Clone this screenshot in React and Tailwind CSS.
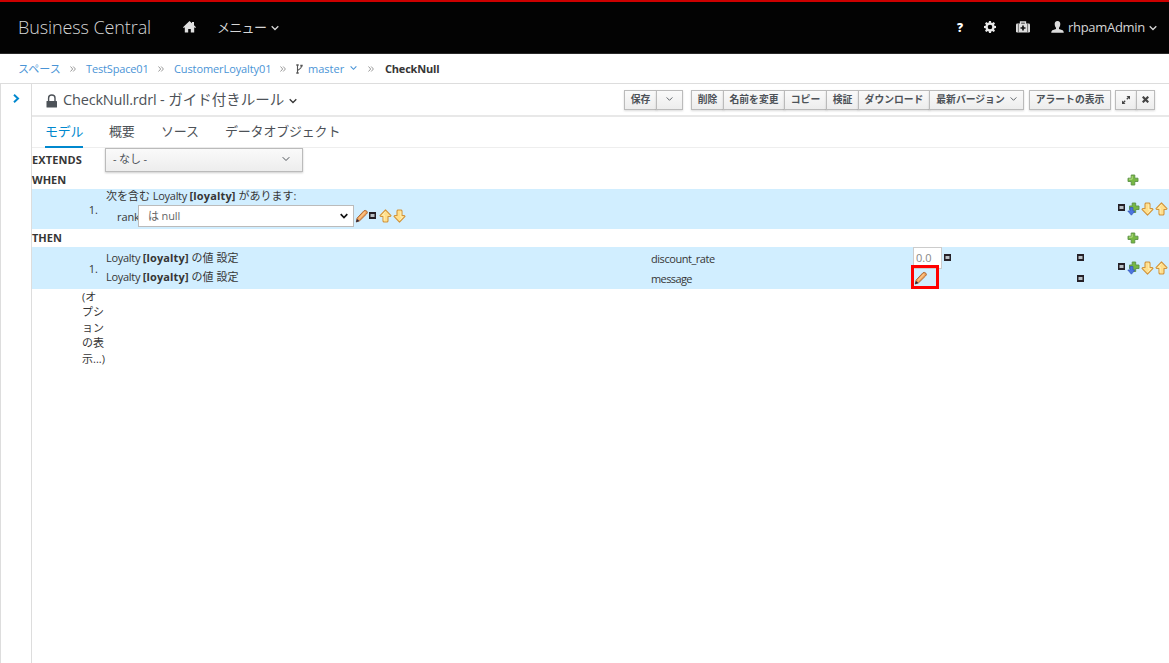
import React from 'react';

const Chevron = ({ className = '', w = 8, sw = 1.3 }) => (
  <svg width={w} height="6" viewBox="0 0 8 6" className={`shrink-0 ${className}`} fill="none" stroke="currentColor" strokeWidth={sw}>
    <path d="M0.7 1.2 4 4.5 7.3 1.2" />
  </svg>
);

const Pencil = () => (
  <svg width="14" height="14" viewBox="0 0 14 14" className="shrink-0">
    <path d="M2 9.2 9 1.7Q10.8.8 12.2 2.6 12.8 4 11.5 5L4.6 11.8 1.3 13Z" fill="#efa35d" stroke="#a6602c" strokeWidth="0.9" />
    <path d="M4.2 9.4 10 3.2" stroke="#fcc98d" strokeWidth="1.2" />
    <path d="M1 13.3 2 9.9 4.4 12Z" fill="#26263f" />
  </svg>
);

const Square = () => (
  <svg width="7" height="7" viewBox="0 0 7 7" className="shrink-0">
    <rect width="7" height="7" fill="#252027" />
    <rect x="1.5" y="2" width="4" height="3" fill="#b9c0c5" />
  </svg>
);

const Arrow = ({ down }) => (
  <svg width="13" height="14" viewBox="0 0 13 14" className={`shrink-0 ${down ? 'rotate-180' : ''}`}>
    <path d="M6.5.8 12 6.6 11.3 7.5H9V12.2L8.2 13H4.8L4 12.2V7.5H1.7L1 6.6Z" fill="#ffdf8c" stroke="#d1943c" strokeWidth="1.1" strokeLinejoin="round" />
    <path d="M6.2 2.8 3.5 6H5.2V11.5" fill="none" stroke="#fff0b4" strokeWidth="1" />
  </svg>
);

const Plus = () => (
  <svg width="12" height="12" viewBox="0 0 12 12" className="shrink-0">
    <path d="M4.2 1H7.8V4.2H11V7.5H7.8V11H4.2V7.5H1V4.2H4.2Z" fill="#77b843" stroke="#5c9148" strokeWidth="0.9" strokeLinejoin="round" />
    <path d="M5.2 2V5.2H2" fill="none" stroke="#b4dc83" />
  </svg>
);

const PlusDown = () => (
  <svg width="13" height="14" viewBox="0 0 13 14" className="shrink-0">
    <path d="M5.2 1H8.7V4H12V7.5H8.7V10.5H5.2V7.5H2.5V4H5.2Z" fill="#77b843" stroke="#5c9148" strokeWidth="0.9" strokeLinejoin="round" />
    <path d="M3 5.5H6V9H8L4.4 13.2.8 9H3Z" fill="#4c74df" stroke="#3458b8" strokeWidth="0.7" />
  </svg>
);

const Crumb = ({ children, className }) => (
  <span className={`shrink-0 whitespace-nowrap text-[#4a94d6] ${className}`}>{children}</span>
);

const Sep = ({ className }) => (
  <svg width="6" height="6" viewBox="0 0 6 6" className={`mt-px shrink-0 ${className}`} fill="none" stroke="#999" strokeWidth="1">
    <path d="M.5.5 2.7 3 .5 5.5M3.2.5 5.4 3 3.2 5.5" />
  </svg>
);

const Btn = ({ children, className }) => (
  <button className={`flex h-5 shrink-0 items-center justify-center whitespace-nowrap border border-[#bbb] bg-linear-to-b from-[#fafafa] to-[#ededed] text-[9.8px] font-bold leading-none text-[#4d5258] shadow-[0_1px_2px_rgba(0,0,0,0.15)] ${className}`}>
    {children}
  </button>
);

const RowActions = () => (
  <div className="flex w-[52px] shrink-0 items-center">
    <div className="mb-[3px]"><Square /></div>
    <div className="ml-[2px]"><PlusDown /></div>
    <div className="ml-[1px]"><Arrow down /></div>
    <div className="ml-[1px]"><Arrow /></div>
  </div>
);

const ActionText = () => (
  <div className="w-[545px] shrink-0 whitespace-nowrap">
    <span className="tracking-[-0.3px]">Loyalty </span><b className="tracking-[0.15px]">[loyalty]</b> の値 設定
  </div>
);

export default function App() {
  return (
    <div className="flex h-[663px] w-[1169px] flex-col overflow-hidden bg-white font-['Open_Sans','Noto_Sans_CJK_JP',sans-serif] text-[11px] leading-[15px] text-[#363636]">
      <header className="flex h-[54px] shrink-0 items-center border-t-2 border-b border-t-[#cc0000] border-b-[#292929] bg-[#030303] pb-px text-[#d6d6d6]">
        <span className="ml-[18px] w-[165px] shrink-0 whitespace-nowrap text-[18px] font-light leading-6 tracking-[-0.1px]">Business Central</span>
        <svg width="13" height="12" viewBox="0 0 13 12" className="shrink-0" fill="#e0e0e0">
          <path d="M6.5 0 9 2.3V1H11V4.2L13 6.2 12.2 7 11.2 6.2V11.5H7.8V8H5.2V11.5H1.8V6.2L.8 7 0 6.2Z" />
        </svg>
        <span className="ml-[21px] w-[54px] shrink-0 whitespace-nowrap text-[13px] tracking-[-0.7px]">メニュー</span>
        <Chevron className="mt-px" />
        <div className="ml-auto flex items-center">
          <span className="w-[28px] pl-px text-[12px] font-extrabold text-white">?</span>
          <svg width="12" height="12" viewBox="0 0 12 12" fill="#e8e8e8">
            <path fillRule="evenodd" d="M5 0H7L7.3 1.7 8.2 2.1 9.7 1.1 11 2.4 10 3.8 10.4 4.8 12 5V7L10.4 7.3 10 8.2 11 9.7 9.7 11 8.2 10 7.3 10.4 7 12H5L4.7 10.4 3.8 10 2.4 11 1 9.7 2 8.2 1.6 7.3 0 7V5L1.6 4.7 2 3.8 1 2.4 2.4 1.1 3.8 2 4.7 1.6ZM6 3.7A2.3 2.3 0 1 0 6 8.3 2.3 2.3 0 1 0 6 3.7Z" />
          </svg>
          <svg width="14" height="12" viewBox="0 0 14 12" className="ml-[20px]">
            <path d="M4.5 3V1H9.5V3" fill="none" stroke="#ddd" strokeWidth="1.3" />
            <rect y="2.5" width="14" height="9" rx="1.2" fill="#ddd" />
            <path d="M2.4 2.5V11.5M11.6 2.5V11.5" stroke="#555" strokeWidth="0.8" />
            <path d="M7 4.5V9.5M4.5 7H9.5" stroke="#111" strokeWidth="1.7" />
          </svg>
          <svg width="13" height="12" viewBox="0 0 13 12" className="ml-[21px]" fill="#ddd">
            <path d="M6.5 0C8.6 0 9.4 1.3 9.3 3.2 9.2 5.1 8.5 6.2 8 6.8V8L11.7 9.2Q12.7 9.7 12.8 11.8H.2Q.3 9.7 1.3 9.2L5 8V6.8C4.5 6.2 3.8 5.1 3.7 3.2 3.6 1.3 4.4 0 6.5 0Z" />
          </svg>
          <span className="ml-[4px] w-[81px] whitespace-nowrap text-[13px] tracking-[-0.3px]">rhpamAdmin</span>
          <Chevron className="mt-px mr-[12px]" />
        </div>
      </header>

      <nav className="flex h-[30px] shrink-0 items-center border-b border-[#ddd] pl-[18px]">
        <Crumb className="w-[52px]">スペース</Crumb>
        <Sep className="mr-[10px]" />
        <Crumb className="w-[72px] tracking-[-0.15px]">TestSpace01</Crumb>
        <Sep className="mr-[10px]" />
        <Crumb className="w-[106px] tracking-[-0.1px]">CustomerLoyalty01</Crumb>
        <Sep className="mr-[10px]" />
        <svg width="7" height="10" viewBox="0 0 7 10" className="mr-[5px] shrink-0" fill="none" stroke="#555" strokeWidth="1.1">
          <path d="M1.5 1V9M1.5 7C1.5 5 5.5 6 5.5 2" />
          <path d="M.3 1H2.7M.3 9H2.7M4.3 1.6H6.7" strokeWidth="1.7" />
        </svg>
        <Crumb className="w-[42px]">master</Crumb>
        <Chevron w={7} className="mb-px text-[#4a94d6]" />
        <Sep className="mr-[11px] ml-[11px]" />
        <b className="whitespace-nowrap tracking-[-0.2px]">CheckNull</b>
      </nav>

      <div className="flex min-h-0 flex-1">
        <aside className="w-[32px] shrink-0 border-x border-[#ddd] pt-[10px] pl-[12px]">
          <svg width="7" height="9" viewBox="0 0 7 9" fill="none" stroke="#0088ce" strokeWidth="2">
            <path d="M1 .8 5 4.5 1 8.2" />
          </svg>
        </aside>

        <main className="flex min-w-0 flex-1 flex-col">
          <div className="flex h-[33px] shrink-0 items-center border-b-2 border-[#e8e8e8]">
            <svg width="12" height="14" viewBox="0 0 12 14" className="mt-[3px] ml-[14px] shrink-0">
              <path d="M2.6 8V4a3.2 3 0 0 1 6.4 0V8" fill="none" stroke="#4d5258" strokeWidth="1.4" />
              <rect x=".5" y="7" width="10.5" height="6.5" rx=".5" fill="#4d5258" />
            </svg>
            <span className="ml-[5px] w-[226px] shrink-0 whitespace-nowrap text-[14.5px] leading-5 text-[#4d5258]"><span className="tracking-[-0.18px]">CheckNull.rdrl - </span>ガイド付きルール</span>
            <Chevron className="mt-[2px]" />
            <div className="mr-[14px] ml-auto flex">
              <Btn className="w-[33px]">保存</Btn>
              <Btn className="-ml-px w-[27px]"><Chevron w={7} sw={1} className="mb-[2px]" /></Btn>
              <Btn className="ml-[8px] w-[33px]">削除</Btn>
              <Btn className="-ml-px w-[62px]">名前を変更</Btn>
              <Btn className="-ml-px w-[43px]">コピー</Btn>
              <Btn className="-ml-px w-[33px]">検証</Btn>
              <Btn className="-ml-px w-[72px]">ダウンロード</Btn>
              <Btn className="-ml-px w-[95px] from-[#f0f0f0]">最新バージョン<Chevron w={7} sw={1} className="mb-[2px] ml-[5px]" /></Btn>
              <Btn className="ml-[5px] w-[82px]">アラートの表示</Btn>
              <Btn className="ml-[4px] w-[22px]">
                <svg width="10" height="10" viewBox="0 0 10 10" fill="none" stroke="#444" strokeWidth="1.3">
                  <path d="M5.8 4.2 8.5 1.5M4.2 5.8 1.5 8.5" /><path d="M5.5 1H9V4.5ZM1 5.5V9H4.5Z" fill="#444" stroke="none" />
                </svg>
              </Btn>
              <Btn className="-ml-px w-[19px]">
                <svg width="7" height="7" viewBox="0 0 7 7" stroke="#444" strokeWidth="2.2"><path d="M.7.7 6.3 6.3M6.3.7.7 6.3" /></svg>
              </Btn>
            </div>
          </div>

          <div className="flex h-[31px] shrink-0 border-b border-[#eee] pl-[13px] text-[13px] leading-[29px] tracking-[-0.2px] text-[#4d5258]">
            <div className="h-[31px] w-[38px] shrink-0 whitespace-nowrap border-b-2 border-[#0088ce] text-[#0088ce]">モデル</div>
            <div className="ml-[26px] w-[52px] shrink-0">概要</div>
            <div className="w-[64px] shrink-0">ソース</div>
            <div className="whitespace-nowrap">データオブジェクト</div>
          </div>

          <div className="flex h-[25px] shrink-0">
            <b className="w-[73px] shrink-0 pt-[4px] tracking-[0.1px]">EXTENDS</b>
            <div className="flex h-[24px] w-[198px] items-center justify-between border border-[#bbb] bg-linear-to-b from-[#fafafa] to-[#ededed] pr-[12px] pb-[3px] pl-[7px] text-[#4d5258] shadow-[0_1px_2px_rgba(0,0,0,0.2)]">
              <span className="tracking-[-0.15px]">- なし -</span><Chevron w={8} sw={1} className="mt-px" />
            </div>
          </div>
          <div className="flex h-[16px] shrink-0 items-center pb-[2px]">
            <b className="-mt-px w-[1095px] shrink-0">WHEN</b><Plus />
          </div>
          <section className="flex h-[40px] shrink-0 items-center bg-[#d1eeff]">
            <span className="w-[74px] shrink-0 pr-[8px] text-right">1.</span>
            <div className="flex h-full w-[1012px] shrink-0 flex-col">
              <div className="h-[16px] whitespace-nowrap leading-[14px]">次を含む <span className="tracking-[-0.3px]">Loyalty </span><b className="tracking-[0.15px]">[loyalty]</b> があります:</div>
              <div className="flex h-[22px] items-center">
                <span className="w-[32px] shrink-0 pl-[11px] tracking-[-0.1px]">rank</span>
                <div className="flex h-[22px] w-[216px] items-center justify-between border border-[#bbb] bg-white pr-[4px] pb-px pl-[9px] text-[#666]">
                  <span className="tracking-[-0.15px]">は null</span>
                  <Chevron w={10} sw={1.7} className="text-[#111]" />
                </div>
                <div className="ml-px"><Pencil /></div>
                <div className="mb-px"><Square /></div>
                <div className="ml-[3px]"><Arrow /></div>
                <div className="ml-px"><Arrow down /></div>
              </div>
            </div>
            <RowActions />
          </section>
          <div className="flex h-[18px] shrink-0 items-center">
            <b className="-mt-px w-[1095px] shrink-0">THEN</b><Plus />
          </div>
          <section className="flex h-[42px] shrink-0 items-center bg-[#d1eeff]">
            <span className="w-[74px] shrink-0 pr-[8px] text-right">1.</span>
            <div className="flex h-full w-[1012px] shrink-0 flex-col">
              <div className="flex h-[21px] shrink-0 items-center">
                <ActionText />
                <span className="w-[262px] shrink-0 pt-px tracking-[-0.45px]">discount_rate</span>
                <div className="mr-[2px] h-[22px] w-[29px] shrink-0 border border-[#ccc] bg-white pl-[2px] leading-5 text-[#888]">0.0</div>
                <Square />
                <div className="ml-[126px]"><Square /></div>
              </div>
              <div className="flex h-[21px] shrink-0 items-center">
                <div className="-mt-[4px] shrink-0"><ActionText /></div>
                <span className="w-[260px] shrink-0 tracking-[-0.6px]">message</span>
                <div className="z-10 -mt-[3px] flex h-[24px] w-[28px] shrink-0 items-center border-3 border-[#f00] pt-[2px]">
                  <Pencil />
                </div>
                <div className="ml-[138px]"><Square /></div>
              </div>
            </div>
            <RowActions />
          </section>
          <div className="ml-[50px] w-[26px] text-[11px] leading-[15.4px]">(オ<br />プシ<br />ョン<br />の表<br />示...)</div>
        </main>
      </div>
    </div>
  );
}
